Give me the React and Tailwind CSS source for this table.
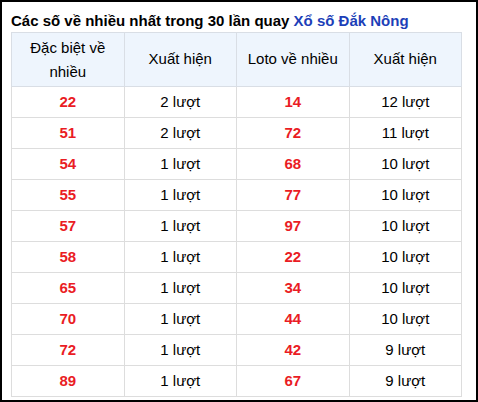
const rows = [
  ["22", "2 lượt", "14", "12 lượt"],
  ["51", "2 lượt", "72", "11 lượt"],
  ["54", "1 lượt", "68", "10 lượt"],
  ["55", "1 lượt", "77", "10 lượt"],
  ["57", "1 lượt", "97", "10 lượt"],
  ["58", "1 lượt", "22", "10 lượt"],
  ["65", "1 lượt", "34", "10 lượt"],
  ["70", "1 lượt", "44", "10 lượt"],
  ["72", "1 lượt", "42", "9 lượt"],
  ["89", "1 lượt", "67", "9 lượt"],
];

const App = () => {
  return (
    <div className="w-[478px] h-[402px] border-2 border-black bg-white pl-[9px] pt-[9px] font-['Liberation_Sans',Arial,sans-serif] text-[15px] text-black">
      <h2 className="text-[15px] font-bold leading-[20px] mb-[1px]">
        Các số về nhiều nhất trong 30 lần quay{" "}
        <span className="text-[#1d3fb8]">Xổ số Đắk Nông</span>
      </h2>

      <table className="w-[451px] table-fixed border-collapse">
        <thead>
          <tr className="bg-[#eef5fd]">
            <th className="h-[54px] border border-[#d9dee5] font-normal leading-[24px] px-2">
              Đặc biệt về nhiều
            </th>
            <th className="border border-[#d9dee5] font-normal">Xuất hiện</th>
            <th className="border border-[#d9dee5] font-normal">Loto về nhiều</th>
            <th className="border border-[#d9dee5] font-normal">Xuất hiện</th>
          </tr>
        </thead>
        <tbody>
          {rows.map((row, i) => (
            <tr key={i} className="h-[31px] text-center">
              <td className="border border-[#dddddd] font-bold text-[#ea1c24]">{row[0]}</td>
              <td className="border border-[#dddddd]">{row[1]}</td>
              <td className="border border-[#dddddd] font-bold text-[#ea1c24]">{row[2]}</td>
              <td className="border border-[#dddddd]">{row[3]}</td>
            </tr>
          ))}
        </tbody>
      </table>
    </div>
  );
};

export default App;
